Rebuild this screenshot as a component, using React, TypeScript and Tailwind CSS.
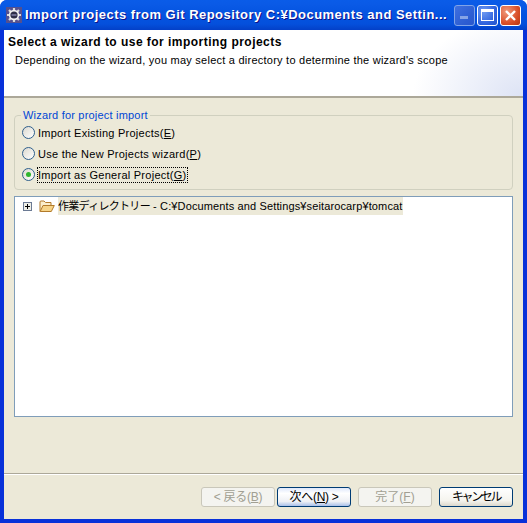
const ui = "font-['Liberation_Sans','Noto_Sans_CJK_JP',sans-serif]";

function GearIcon() {
  return (
    <svg width="16" height="16" viewBox="0 0 16 16">
      <rect width="16" height="16" fill="#54508f" />
      <path d="M8 1v14M1 8h14M3 3l10 10M13 3 3 13" stroke="#d9d9d9" strokeWidth="2.2" />
      <circle cx="8" cy="8" r="5.2" fill="#f2f2f2" />
      <circle cx="8" cy="8" r="3.6" fill="#2e2e48" />
      <rect x="5.5" y="7" width="5" height="2" fill="#6d6d90" />
    </svg>
  );
}

function TitleButton({ kind }: { kind: 'min' | 'max' | 'close' }) {
  const color =
    kind === 'close'
      ? 'bg-[radial-gradient(circle_at_30%_30%,#f09a7c,#d9502a_60%,#b8340f)] border-white'
      : kind === 'max'
        ? 'bg-[radial-gradient(circle_at_30%_30%,#6f9bf2,#2f62dd_65%,#2353c9)] border-white'
        : 'bg-[linear-gradient(135deg,#3f70e0,#2c5dd2_70%,#2a58cc)] border-[#7fa3e8]';
  return (
    <div className={`flex size-[21px] items-center justify-center rounded-[3px] border ${color}`}>
      {kind === 'min' && <div className="mt-[5px] mr-[2px] h-[3px] w-[8px] bg-[#86a4e6]" />}
      {kind === 'max' && <div className="h-[12px] w-[13px] border border-t-[3px] border-white" />}
      {kind === 'close' && (
        <svg width="13" height="13" viewBox="0 0 13 13">
          <path d="M2 2 L11 11 M11 2 L2 11" stroke="#fff" strokeWidth="2.4" />
        </svg>
      )}
    </div>
  );
}

function Mnemonic({ children }: { children: string }) {
  return <span className="underline">{children}</span>;
}

function Radio({ checked, label, mn, focus }: { checked?: boolean; label: string; mn: string; focus?: boolean }) {
  return (
    <div className="flex h-[21px] items-center">
      <div className="flex size-[13px] shrink-0 items-center justify-center rounded-full border border-[#2f5f8c] bg-[linear-gradient(135deg,#dcd9cf,#ffffff)]">
        {checked && <div className="size-[5px] rounded-full bg-[#2fb52f]" />}
      </div>
      <span className={`ml-[3px] text-[11px] leading-[14px] tracking-[0.26px] text-black ${focus ? 'outline-1 outline-dotted outline-black' : ''}`}>
        {label}(<Mnemonic>{mn}</Mnemonic>)
      </span>
    </div>
  );
}

function WizardButton({ children, disabled, def, className }: { children: React.ReactNode; disabled?: boolean; def?: boolean; className: string }) {
  const look = disabled
    ? 'border-[#c9c7ba] bg-[#f4f4f0] text-[#a19f92]'
    : def
      ? 'border-[#003c74] bg-[linear-gradient(#dfe8fb,#ffffff_30%,#eef0f5_75%,#a9c0ea)] text-black'
      : 'border-[#003c74] bg-[linear-gradient(#ffffff,#f5f4ee_70%,#dcd8cc)] text-black';
  return (
    <div className={`flex h-[20px] items-center justify-center rounded-[3px] border text-[12px] leading-none ${look} ${className}`}>
      {children}
    </div>
  );
}

function Plus() {
  return (
    <svg width="7" height="7" viewBox="0 0 7 7">
      <path d="M1 3.5H6M3.5 1V6" stroke="#000" />
    </svg>
  );
}

export default function App() {
  return (
    <div className={`flex h-[523px] w-[527px] flex-col overflow-hidden rounded-t-[7px] bg-[#0831d9] ${ui}`}>
      <header className="flex h-[30px] shrink-0 items-center bg-[linear-gradient(#0a5ce8,#0a5ae6_15%,#0453e0_50%,#0450dc_80%,#0340c8)] pr-[6px] pl-[6px]">
        <GearIcon />
        <h1 className="ml-[3px] min-w-0 flex-1 whitespace-nowrap text-[13px] font-bold tracking-[0.47px] text-white [text-shadow:1px_1px_#0f1089]">
          Import projects from Git Repository C:¥Documents and Settin...
        </h1>
        <div className="flex gap-[2px]">
          <TitleButton kind="min" />
          <TitleButton kind="max" />
          <TitleButton kind="close" />
        </div>
      </header>

      <div className="mx-[4px] mb-[4px] flex min-h-0 flex-1 flex-col bg-[#ece9d8]">
        <section className="h-[68px] shrink-0 border-b-2 border-b-[#aca899] bg-[radial-gradient(ellipse_110px_80px_at_100%_100%,#dde3f5,#ffffff)] pt-[5px] text-black">
          <h2 className="pl-[4px] text-[12px] leading-[14px] font-bold tracking-[0.47px]">Select a wizard to use for importing projects</h2>
          <p className="mt-[4px] pl-[11px] text-[11px] leading-[14px] tracking-[0.24px]">
            Depending on the wizard, you may select a directory to determine the wizard's scope
          </p>
        </section>

        <fieldset className="mx-[10px] mt-[10px] h-[82px] shrink-0 rounded-[4px] border border-[#d0d0bf] pl-[7px]">
          <legend className="-ml-[1px] px-[2px] text-[11px] leading-[14px] tracking-[0.2px] text-[#0046d5]">Wizard for project import</legend>
          <Radio label="Import Existing Projects" mn="E" />
          <Radio label="Use the New Projects wizard" mn="P" />
          <Radio label="Import as General Project" mn="G" checked focus />
        </fieldset>

        <div className="mx-[10px] mt-[6px] h-[221px] shrink-0 border border-[#7f9db9] bg-white">
          <div className="flex h-[18px] items-center pl-[8px]">
            <div className="flex size-[9px] items-center justify-center border border-[#6b7a94] bg-[#eeeee6]">
              <Plus />
            </div>
            <svg className="ml-[7px]" width="16" height="16" viewBox="0 0 16 16">
              <path d="M1 13.5V4q0-1 1-1h3l1.5 1.5H12V8" fill="#fbeecb" stroke="#b27a2a" />
              <path d="M1.2 13.5 4 7.5h11.3l-3 6z" fill="#f6d488" stroke="#b27a2a" />
            </svg>
            <span className="ml-[3px] whitespace-nowrap bg-[#ece9d8] pr-[1px] text-[11px] leading-[18px] tracking-[0.13px] text-black">
              <span className="tracking-[-0.7px]">作業ディレクトリー</span> - C:¥Documents and Settings¥seitarocarp¥tomcat
            </span>
          </div>
        </div>

        <div className="mt-[56px] border-t border-b border-t-[#aca899] border-b-white" />

        <footer className="flex justify-end pt-[12px] pr-[10px]">
          <WizardButton disabled className="w-[74px] tracking-[-0.3px]">&lt; 戻る(<Mnemonic>B</Mnemonic>)</WizardButton>
          <WizardButton def className="ml-[2px] w-[74px] tracking-[-0.3px]">次へ(<Mnemonic>N</Mnemonic>) &gt;</WizardButton>
          <WizardButton disabled className="ml-[7px] w-[74px]">完了(<Mnemonic>F</Mnemonic>)</WizardButton>
          <WizardButton className="ml-[7px] w-[74px] tracking-[-2.4px]">キャンセル</WizardButton>
        </footer>
      </div>
    </div>
  );
}
